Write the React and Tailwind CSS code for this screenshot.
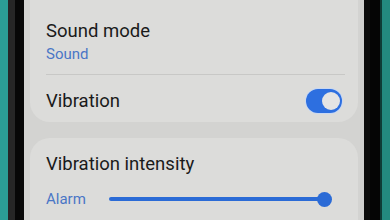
export default function App() {
  return (
    <div
      className="flex h-[220px] w-[390px] overflow-hidden bg-[#2a9a91]"
      style={{ fontFamily: 'Roboto, "Noto Sans", sans-serif' }}
    >
      {/* left bezel */}
      <div className="w-[8px] shrink-0 bg-[#2b9e95]" />
      <div className="w-[7px] shrink-0 bg-[#262626]" />
      <div className="w-[9px] shrink-0 bg-[#070707]" />

      {/* screen */}
      <div className="flex w-[340px] shrink-0 flex-col gap-[16px] bg-[#d3d3d1] px-[6px]">
        <div className="-mt-[20px] rounded-[20px] bg-[#dcdcda] px-[16px] pt-[39px] pb-[9px]">
          <div className="text-[18.5px] leading-[24px] text-[#1a1a1a]">Sound mode</div>
          <div className="mt-[1px] text-[15px] leading-[20px] text-[#4a76c6]">Sound</div>
          <div className="mt-[10px] mr-[-3px] h-px bg-[#c8c8c6]" />
          <div className="mt-[14px] flex items-center justify-between">
            <span className="text-[18.5px] leading-[24px] text-[#1a1a1a]">Vibration</span>
            <div className="flex h-[24px] w-[36px] items-center justify-end rounded-full bg-[#2d6fe0] px-[2px] shadow-[0_0_0_1px_#c9d8f2]">
              <div className="h-[18px] w-[18px] rounded-full bg-[#e4e4e4]" />
            </div>
          </div>
        </div>

        <div className="flex-1 rounded-t-[20px] bg-[#dcdcda] pl-[16px] pr-[26px] pt-[14px]">
          <div className="text-[18.5px] leading-[24px] text-[#1a1a1a]">Vibration intensity</div>
          <div className="mt-[13px] flex items-center">
            <span className="text-[15px] leading-[20px] text-[#4a76c6]">Alarm</span>
            <div className="ml-[23px] flex flex-1 items-center">
              <div className="h-[4px] flex-1 rounded-full bg-[#2b6bd6]" />
              <div className="-ml-[7px] h-[15px] w-[15px] rounded-full bg-[#2b6bd6]" />
            </div>
          </div>
        </div>
      </div>

      {/* right bezel */}
      <div className="w-[6px] shrink-0 bg-[#0d0d0d]" />
      <div className="w-[10px] shrink-0 bg-[#050505]" />
      <div className="w-[2px] shrink-0 bg-[#0e3b36]" />
      <div className="flex-1 bg-[#23897f]" />
    </div>
  );
}
